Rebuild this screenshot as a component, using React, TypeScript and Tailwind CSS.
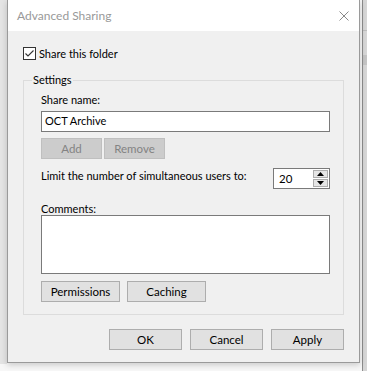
// Advanced Sharing dialog (Windows 10 style), inactive window on a desktop.

const font = { fontFamily: 'Lato, "Noto Sans", sans-serif' };

function Button({ label, disabled, className = "" }: { label: string; disabled?: boolean; className?: string }) {
  return (
    <div
      className={
        "flex h-[21px] items-center justify-center border text-[11.5px] leading-none " +
        (disabled
          ? "border-[#bfbfbf] bg-[#cccccc] text-[#838383] "
          : "border-[#adadad] bg-[#e1e1e1] text-black ") +
        className
      }
    >
      {label}
    </div>
  );
}

function Checkbox() {
  return (
    <div className="flex h-[13px] w-[13px] items-center justify-center border border-[#333333] bg-white">
      <svg width="11" height="11" viewBox="0 0 11 11" fill="none">
        <path d="M1.5 5.5 L4 8 L9.5 2.5" stroke="#333333" strokeWidth="1.1" />
      </svg>
    </div>
  );
}

function Spinner() {
  return (
    <div className="flex h-[21px] w-[57px] border border-[#7a7a7a] bg-white">
      <span className="flex-1 pl-[5px] text-[11.5px] leading-[19px] text-black">20</span>
      <div className="flex w-[16px] flex-col gap-px py-px pr-px">
        <div className="flex flex-1 items-center justify-center border border-[#adadad] bg-[#e5e5e5]">
          <svg width="7" height="4" viewBox="0 0 7 4">
            <path d="M0 4 L3.5 0 L7 4 Z" fill="#000" />
          </svg>
        </div>
        <div className="flex flex-1 items-center justify-center border border-[#adadad] bg-[#e5e5e5]">
          <svg width="7" height="4" viewBox="0 0 7 4">
            <path d="M0 0 L3.5 4 L7 0 Z" fill="#000" />
          </svg>
        </div>
      </div>
    </div>
  );
}

export default function App() {
  return (
    <div className="relative h-[371px] w-[367px] overflow-hidden bg-[#f7f7f7]" style={font}>
      {/* desktop behind the dialog */}
      <div className="absolute left-0 top-0 h-[364px] w-[7px] bg-[#e4e4e4]" />
      <div className="absolute left-[362px] top-0 flex h-[371px] w-[5px] flex-col border-l border-[#8c8c8c] bg-[#d6d6d6]">
        <div className="mt-[30px] h-px bg-[#bdbdbd]" />
        <div className="mt-[24px] h-[10px] bg-[#c4c4c4]" />
      </div>

      {/* dialog window */}
      <div className="absolute left-[7px] top-0 flex h-[363px] w-[353px] flex-col border-x border-b border-[#9a9a9a] bg-[#f0f0f0] shadow-[0_2px_6px_rgba(0,0,0,0.18)]">
        <div className="flex h-[31px] items-center justify-between bg-white pl-[9px] pr-[10px]">
          <span className="text-[12px] text-[#999999]">Advanced Sharing</span>
          <svg width="10" height="10" viewBox="0 0 10 10">
            <path d="M0.5 0.5 L9.5 9.5 M9.5 0.5 L0.5 9.5" stroke="#8a8a8a" strokeWidth="1" />
          </svg>
        </div>

        <div className="flex flex-col px-[15px] pt-[16px] text-[11px] text-black">
          <div className="flex h-[13px] items-center gap-[3px]">
            <Checkbox />
            <span className="leading-4">Share this folder</span>
          </div>

          <fieldset className="mt-[12px] border border-[#dcdcdc] p-0">
            <legend className="ml-[8px] px-px leading-4">Settings</legend>
            <div className="flex flex-col pb-[12px] pl-[17px] pr-[13px] pt-[4px]">
              <span className="leading-4">Share name:</span>
              <div className="mt-[3px] flex h-[21px] items-center border border-[#7a7a7a] bg-white pl-[3px]">
                OCT Archive
              </div>
              <div className="mt-[6px] flex gap-[2px]">
                <Button label="Add" disabled className="w-[61px]" />
                <Button label="Remove" disabled className="w-[61px]" />
              </div>
              <div className="mt-[9px] flex items-start justify-between">
                <span className="whitespace-nowrap leading-[16px]">Limit the number of simultaneous users to:</span>
                <Spinner />
              </div>
              <span className="mt-[14px] leading-[12px]">Comments:</span>
              <div className="h-[59px] border border-[#7a7a7a] bg-white" />
              <div className="mt-[7px] flex gap-[7px]">
                <Button label="Permissions" className="w-[79px]" />
                <Button label="Caching" className="w-[79px]" />
              </div>
            </div>
          </fieldset>

          <div className="mt-[14px] flex justify-end gap-[8px]">
            <Button label="OK" className="w-[73px]" />
            <Button label="Cancel" className="w-[73px]" />
            <Button label="Apply" className="w-[73px]" />
          </div>
        </div>
      </div>
    </div>
  );
}
